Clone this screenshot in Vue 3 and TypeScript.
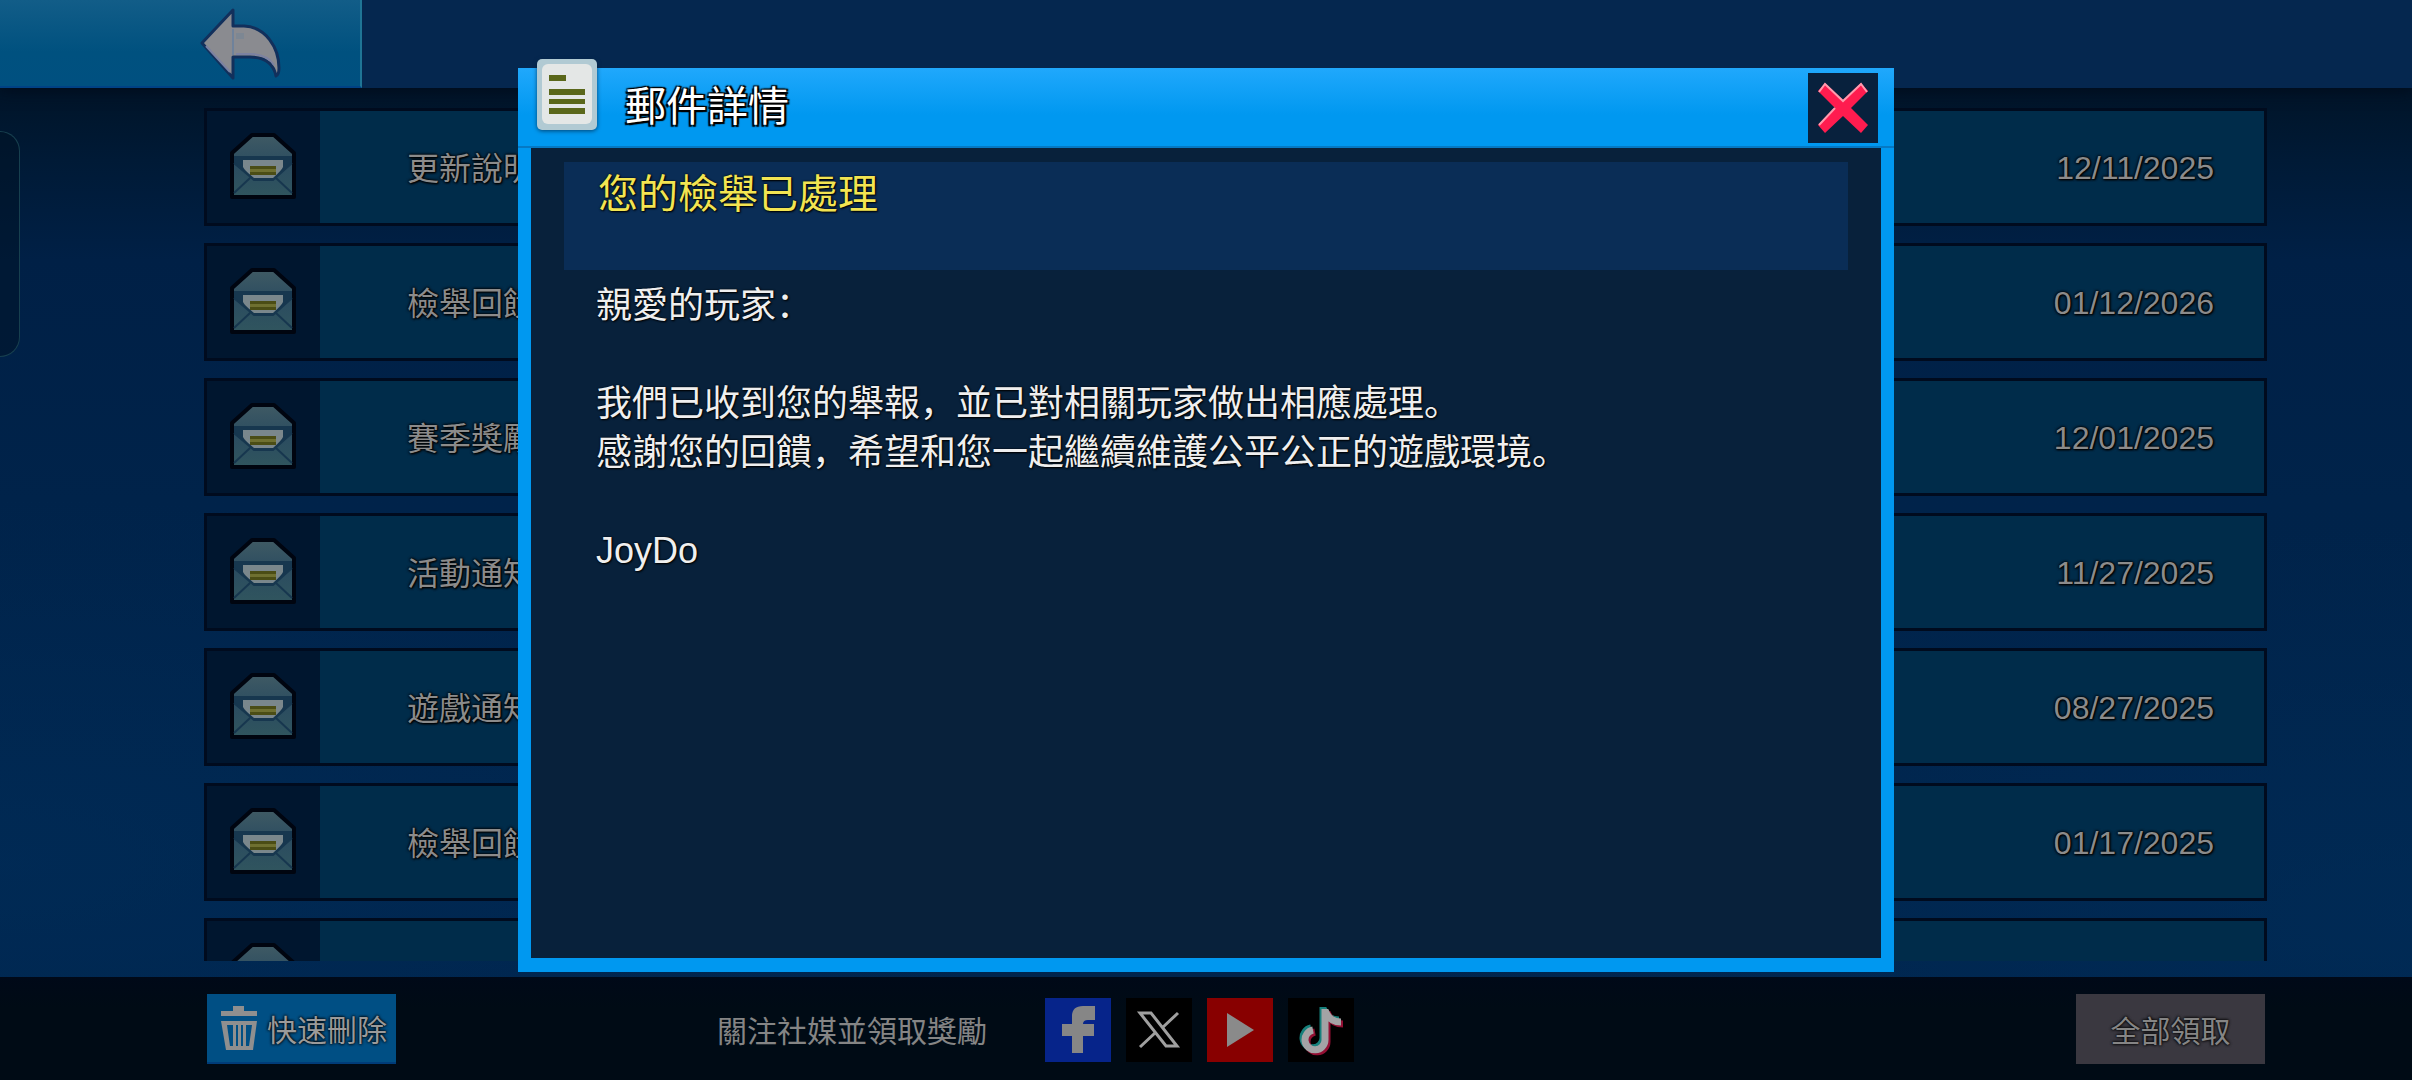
<script setup lang="ts">
interface Mail {
  title: string
  date: string
}

const mails: Mail[] = [
  { title: '更新說明', date: '12/11/2025' },
  { title: '檢舉回饋', date: '01/12/2026' },
  { title: '賽季獎勵', date: '12/01/2025' },
  { title: '活動通知', date: '11/27/2025' },
  { title: '遊戲通知', date: '08/27/2025' },
  { title: '檢舉回饋', date: '01/17/2025' },
  { title: '', date: '' },
]

const body: string[] = [
  '親愛的玩家：',
  '',
  '我們已收到您的舉報，並已對相關玩家做出相應處理。',
  '感謝您的回饋，希望和您一起繼續維護公平公正的遊戲環境。',
  '',
  'JoyDo',
]
</script>

<template>
  <div class="page">
    <header class="topbar">
      <button class="back" type="button" aria-label="返回">
        <svg viewBox="0 0 82 72" width="82" height="72">
          <path d="M2 35 L33 2 V18 H44 C66 19 79 40 79 60 C79 64 78 67 76 68 C73 52 60 49 50 49 H33 V70 Z" fill="#8a8b90" stroke="#12305c" stroke-width="3" stroke-linejoin="round" />
          <path d="M33 21 V47" stroke="#6f829b" stroke-width="2" />
          <path d="M6 38 L30 64 M36 46 H50 C60 46 69 49 74 57" fill="none" stroke="#7c82a2" stroke-width="2" />
          <path d="M36 25 H44 V31 H36 Z" fill="#7d8793" />
        </svg>
      </button>
    </header>

    <div class="handle"></div>

    <main class="inbox">
      <ul class="list">
        <li v-for="(mail, i) in mails" :key="i">
          <button class="row" type="button" :aria-label="mail.title || '郵件'">
            <span class="cell">
              <svg viewBox="0 0 66 66" width="66" height="66">
                <defs>
                  <linearGradient id="env" x1="0" y1="0" x2="0" y2="1">
                    <stop offset="0" stop-color="#3f5a64" />
                    <stop offset="0.5" stop-color="#2b4c60" />
                    <stop offset="1" stop-color="#30555e" />
                  </linearGradient>
                </defs>
                <path d="M2 20 L22 2 H44 L64 20 V64 H2 Z" fill="url(#env)" stroke="#000510" stroke-width="4" stroke-linejoin="round" />
                <path d="M4 23 H62 V31 L42 47 H25 L4 31 Z" fill="#17374f" />
                <path d="M13 27 H53 V34 Q52 37 43 45 H24 Q14 37 13 34 Z" fill="#7a878c" />
                <path d="M20 33 H46 V36 H20 Z M20 39 H46 V42 H20 Z" fill="#4b4d15" />
                <path d="M20 36 H46 V39 H20 Z" fill="#6f7030" />
                <path d="M4 30 L24 47 H43 L62 30 M20 45 L4 60 M46 45 L62 60" fill="none" stroke="#17374f" stroke-width="2" />
              </svg>
            </span>
            <span class="name">{{ mail.title }}</span>
            <span class="date">{{ mail.date }}</span>
          </button>
        </li>
      </ul>
    </main>

    <footer class="bottom">
      <button class="action delete" type="button">
        <svg viewBox="0 0 38 46" width="38" height="46">
          <path d="M13 1 H24 V6 H37 V11 H1 V6 H13 Z" fill="#8f8f8f" />
          <path fill-rule="evenodd" d="M1 16 H37 L33 45 H6 Z M7 20 L10 41 H13 V20 Z M16 20 V41 H18 V20 Z M21 20 V41 H23 V20 Z M26 20 V41 H29 L32 20 Z" fill="#8f8f8f" />
        </svg>
        <span>快速刪除</span>
      </button>
      <p class="follow">關注社媒並領取獎勵</p>
      <nav class="social">
        <a href="#" class="fb" aria-label="Facebook">
          <svg viewBox="0 0 66 64" width="66" height="64">
            <path d="M50 8 V22 H43 Q38 22 38 26 H49 V38 H38 V55 H27 V38 H17 V26 H27 V18 Q27 8 38 8 Z" fill="#868686" />
          </svg>
        </a>
        <a href="#" class="tw" aria-label="X">
          <svg viewBox="0 0 66 64" width="66" height="64">
            <path d="M14 15 H25 L51 48 H40 Z" fill="none" stroke="#a0a0a0" stroke-width="3" />
            <path d="M52 15 L36 30 M29 35 L14 49" fill="none" stroke="#a0a0a0" stroke-width="3" />
          </svg>
        </a>
        <a href="#" class="yt" aria-label="YouTube">
          <svg viewBox="0 0 66 64" width="66" height="64">
            <path d="M20 15 L47 32 L20 49 Z" fill="#8a8a8a" />
          </svg>
        </a>
        <a href="#" class="tt" aria-label="TikTok">
          <svg viewBox="0 0 66 64" width="66" height="64">
            <g fill="none" stroke-width="7">
              <path d="M36 9 V40 A10 10 0 1 1 24 30 M36 10 Q40 22 52 22" stroke="#16807c" transform="translate(-1 0)" />
              <path d="M36 9 V40 A10 10 0 1 1 24 30 M36 10 Q40 22 52 22" stroke="#930f33" transform="translate(3 4)" />
              <path d="M36 9 V40 A10 10 0 1 1 24 30 M36 10 Q40 22 52 22" stroke="#a3a3a5" transform="translate(1 2)" />
            </g>
          </svg>
        </a>
      </nav>
      <button class="action claim" type="button">全部領取</button>
    </footer>

    <div class="overlay">
      <section class="modal" role="dialog" aria-labelledby="modal-title">
        <div class="modal-head">
          <svg class="doc" viewBox="0 0 60 71" width="60" height="71">
            <rect width="60" height="71" rx="5" fill="#b1cad3" />
            <rect x="5" y="5" width="50" height="60" rx="6" fill="#e4e7e6" />
            <path d="M12 16 H29 V22 H12 Z M12 30 H48 V36 H12 Z M12 40 H48 V45 H12 Z M12 49 H48 V55 H12 Z" fill="#5a671a" />
          </svg>
          <h1 id="modal-title">郵件詳情</h1>
          <button class="close" type="button" aria-label="關閉">
            <svg viewBox="0 0 50 52" width="50" height="52">
              <path d="M7 1 L25 18 L43 1 L50 9 L33 26 L50 43 L43 51 L25 34 L7 51 L0 43 L17 26 L0 9 Z" fill="#ff1c4f" />
              <path d="M1 10 L7 2 L25 19 L43 2 L49 10 M17 26 L1 43" fill="none" stroke="#ff9bae" stroke-width="2" />
            </svg>
          </button>
        </div>
        <div class="modal-body">
          <h2>您的檢舉已處理</h2>
          <div class="message">
            <p v-for="(line, i) in body" :key="i">{{ line }}</p>
          </div>
        </div>
      </section>
    </div>
  </div>
</template>

<style>
body {
  margin: 0;
  background: #00234a;
}
</style>

<style scoped>
* {
  box-sizing: border-box;
}

.page {
  position: relative;
  display: flex;
  flex-direction: column;
  height: 100vh;
  overflow: hidden;
  font-family: "Liberation Sans", "Noto Sans CJK SC", sans-serif;
  background:
    radial-gradient(ellipse at 0 80%, rgba(0, 50, 96, 0.4), transparent 30%),
    radial-gradient(ellipse at 100% 85%, rgba(0, 50, 96, 0.4), transparent 30%),
    linear-gradient(#001428 88px, #001a36 160px, #002046 260px, #00234a 500px, #00254e);
}

button {
  padding: 0;
  border: 0;
  font: inherit;
  color: inherit;
}

svg {
  display: block;
  flex: none;
}

.topbar {
  flex: none;
  height: 88px;
  background: #05274f;
  box-shadow: 0 2px 14px #000c1c;
}

.back {
  display: flex;
  align-items: center;
  justify-content: flex-end;
  width: 15%;
  height: 88px;
  padding: 2px 78px 0 0;
  border-right: 2px solid #1f7595;
  border-bottom: 2px solid #004285;
  background: linear-gradient(#125d88, #00517f 60%, #005080);
}

.handle {
  position: absolute;
  top: 131px;
  left: 0;
  width: 20px;
  height: 226px;
  border: 1px solid #17404f;
  border-left: 0;
  border-radius: 0 22px 22px 0;
  background: rgba(0, 18, 36, 0.5);
}

.inbox {
  flex: 1;
  min-height: 0;
  padding: 20px 145px 16px 204px;
}

.list {
  display: flex;
  flex-direction: column;
  gap: 17px;
  height: 100%;
  margin: 0;
  padding: 0;
  overflow: hidden;
  list-style: none;
}

.row {
  display: flex;
  align-items: center;
  width: 100%;
  height: 118px;
  padding-right: 50px;
  border: 3px solid #000b1e;
  background: #002c4a;
  font-size: 32px;
  color: #8b8b8b;
  text-shadow: 0 0 3px #000, 0 0 3px #000, 1px 1px 2px #000;
}

.cell {
  display: flex;
  align-items: center;
  justify-content: center;
  align-self: stretch;
  width: 113px;
  margin-right: 87px;
  padding: 0 2px 2px 0;
  background: #00162f;
}

.name {
  padding-bottom: 2px;
}

.date {
  margin-left: auto;
  padding-top: 2px;
}

.bottom {
  display: flex;
  flex: none;
  align-items: center;
  height: 103px;
  padding: 4px 147px 4px 207px;
  background: linear-gradient(#000918, #000b15 30%);
  font-size: 30px;
  color: #858585;
}

.action {
  display: flex;
  align-items: center;
  justify-content: center;
  width: 189px;
  height: 70px;
  text-shadow: 0 0 3px #000, 0 0 3px #000;
}

.delete {
  gap: 9px;
  padding-left: 4px;
  border-bottom: 2px solid #003c78;
  background: #004f84;
  color: #9a9a9a;
}

.follow {
  margin: 0 58px 0 321px;
}

.social {
  display: flex;
  gap: 15px;
  padding-top: 2px;
}

.fb {
  background: #06248a;
}

.tw,
.tt {
  background: #000;
}

.yt {
  background: #880000;
}

.claim {
  margin-left: auto;
  background: #3a3840;
}

.overlay {
  position: absolute;
  inset: 0;
  display: flex;
  padding: 68px 518px 108px;
}

.modal {
  display: flex;
  flex: 1;
  flex-direction: column;
  min-width: 0;
  background: #0098f0;
}

.modal-head {
  display: flex;
  flex: none;
  align-items: center;
  height: 80px;
  padding: 2px 16px 0 19px;
  border-bottom: 2px solid #0579c4;
  background: linear-gradient(#20a8fc, #0098f0 60%);
}

.doc {
  margin-bottom: 28px;
  filter: drop-shadow(0 1px 2px rgba(0, 30, 60, 0.7));
}

h1 {
  margin: 0 0 2px 28px;
  font-size: 41px;
  font-weight: 400;
  line-height: 60px;
  color: #fff;
  text-shadow: 2px 2px 1px #000, -1px -1px 1px #000, 2px -1px 1px #000, -2px 2px 1px #000, 0 0 3px #000;
}

.close {
  display: flex;
  align-items: center;
  justify-content: center;
  width: 70px;
  height: 70px;
  margin-left: auto;
  background: #08213d;
}

.modal-body {
  flex: 1;
  min-height: 0;
  margin: 0 13px 14px;
  padding: 14px 33px;
  background: #08213b;
}

h2 {
  height: 108px;
  margin: 0;
  padding-left: 34px;
  background: #0a2d56;
  font-size: 40px;
  font-weight: 400;
  line-height: 64px;
  color: #f2e452;
  text-shadow: 0 0 2px #000, 1px 1px 2px #000;
}

.message {
  padding: 11px 0 0 32px;
  font-size: 36px;
  line-height: 49px;
  color: #efefef;
  text-shadow: 0 0 2px #000, 1px 1px 2px #000;
}

.message p {
  height: 49px;
  margin: 0;
  white-space: nowrap;
}
</style>
